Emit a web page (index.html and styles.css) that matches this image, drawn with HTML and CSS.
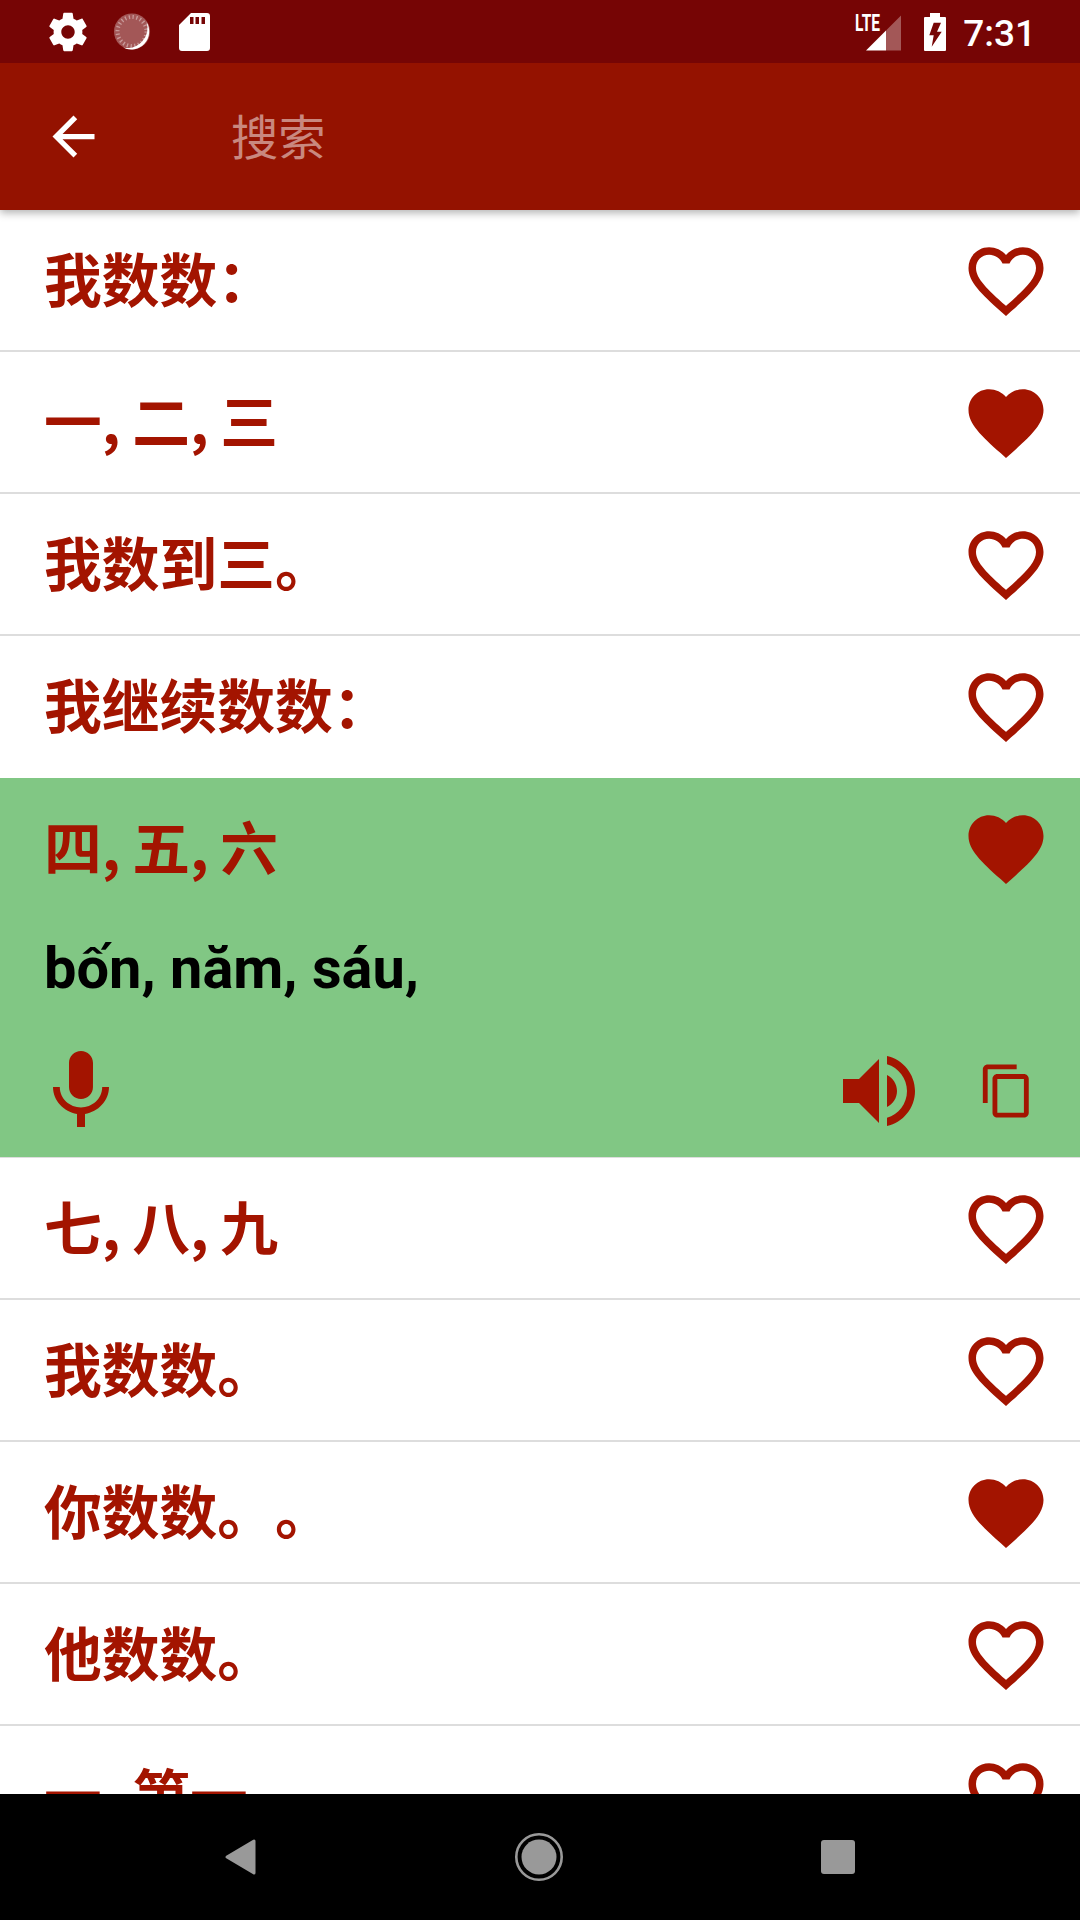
FILE: index.html
```html
<!DOCTYPE html>
<html lang="zh">
<head>
    <meta charset="UTF-8">
    <title>搜索</title>
    <link rel="stylesheet" href="styles.css">
</head>
<body>
<svg class="defs" width="0" height="0">
    <symbol id="heart" viewBox="0 0 24 24"><path d="M12 21.35l-1.45-1.32C5.4 15.36 2 12.28 2 8.5 2 5.42 4.42 3 7.5 3c1.74 0 3.41.81 4.5 2.09C13.09 3.81 14.76 3 16.5 3 19.58 3 22 5.42 22 8.5c0 3.78-3.4 6.86-8.55 11.54L12 21.35z"/></symbol>
    <symbol id="heart-o" viewBox="0 0 24 24"><path d="M16.5 3c-1.74 0-3.41.81-4.5 2.09C10.91 3.81 9.24 3 7.5 3 4.42 3 2 5.42 2 8.5c0 3.78 3.4 6.86 8.55 11.54L12 21.35l1.45-1.32C18.6 15.36 22 12.28 22 8.5 22 5.42 19.58 3 16.5 3zm-4.4 15.55l-.1.1-.1-.1C7.14 14.24 4 11.39 4 8.5 4 6.5 5.5 5 7.5 5c1.54 0 3.04.99 3.57 2.36h1.87C13.46 5.99 14.96 5 16.5 5c2 0 3.5 1.5 3.5 3.5 0 2.89-3.14 5.74-7.9 10.05z"/></symbol>
</svg>

<div class="page">
    <header class="header">
        <div class="status">
            <div class="status-left">
                <svg class="ic-status" viewBox="0 0 24 24"><path fill="#fff" d="M19.43 12.98c.04-.32.07-.64.07-.98s-.03-.66-.07-.98l2.11-1.65c.19-.15.24-.42.12-.64l-2-3.46c-.12-.22-.39-.3-.61-.22l-2.49 1c-.52-.4-1.08-.73-1.69-.98l-.38-2.65C14.46 2.18 14.25 2 14 2h-4c-.25 0-.46.18-.49.42l-.38 2.65c-.61.25-1.17.59-1.69.98l-2.49-1c-.23-.09-.49 0-.61.22l-2 3.46c-.13.22-.07.49.12.64l2.11 1.65c-.04.32-.07.65-.07.98s.03.66.07.98l-2.11 1.65c-.19.15-.24.42-.12.64l2 3.46c.12.22.39.3.61.22l2.49-1c.52.4 1.08.73 1.69.98l.38 2.65c.03.24.24.42.49.42h4c.25 0 .46-.18.49-.42l.38-2.65c.61-.25 1.17-.59 1.69-.98l2.49 1c.23.09.49 0 .61-.22l2-3.46c.12-.22.07-.49-.12-.64l-2.11-1.65zM12 15.5c-1.93 0-3.5-1.57-3.5-3.5s1.57-3.5 3.5-3.5 3.5 1.57 3.5 3.5-1.57 3.5-3.5 3.5z"/></svg>
                <svg class="ic-status" viewBox="0 0 46 46">
                    <circle cx="23" cy="22.500" r="18" fill="#fff" fill-opacity=".33"/>
                    <circle cx="23" cy="22.500" r="14.500" fill="none" stroke="#fff" stroke-opacity=".4" stroke-width="4" stroke-dasharray="1.300 2.500"/>
                    <path fill="#fff" d="M37.500 13A18 18 0 0 1 14 38.500 20 20 0 0 0 37.500 13z"/>
                </svg>
                <svg class="ic-status" viewBox="-7 -4 46 46"><path fill="#fff" fill-rule="evenodd" d="M12 0H28a3 3 0 0 1 3 3V35a3 3 0 0 1-3 3H3a3 3 0 0 1-3-3V12zM11 4V11H14.500V4zM16.500 4V11H20V4zM22.500 4V11H26V4z"/></svg>
            </div>
            <div class="status-right">
                <svg class="ic-signal" viewBox="0 0 56 46">
                    <text class="lte" x="4" y="21.500" textLength="25" lengthAdjust="spacingAndGlyphs">LTE</text>
                    <path fill="#fff" d="M15 41.500 35 21.500V41.500z"/>
                    <path fill="#fff" fill-opacity=".33" d="M35 21.500 50 6.500V41.500H35z"/>
                </svg>
                <svg class="ic-battery" viewBox="0 0 22 38"><path fill="#fff" d="M6 0H16V4H21a1 1 0 0 1 1 1V37a1 1 0 0 1-1 1H1a1 1 0 0 1-1-1V5a1 1 0 0 1 1-1H6z"/><path fill="#760505" d="M9.700 9.700H17L13 18.700H17.700L7.700 33.700 9.700 22.300H5.300z"/></svg>
                <span class="clock">7:31</span>
            </div>
        </div>
        <div class="toolbar">
            <svg class="ic-back" viewBox="0 0 24 24"><path fill="#fff" d="M20 11H7.830l5.590-5.590L12 4l-8 8 8 8 1.410-1.410L7.830 13H20v-2z"/></svg>
            <span class="search-hint">搜索</span>
        </div>
    </header>

    <main class="list">
        <div class="row"><span class="zh">我数数：</span><svg class="heart"><use href="#heart-o"/></svg></div>
        <div class="row"><span class="zh">一, 二, 三</span><svg class="heart"><use href="#heart"/></svg></div>
        <div class="row"><span class="zh">我数到三。</span><svg class="heart"><use href="#heart-o"/></svg></div>
        <div class="row no-line"><span class="zh">我继续数数：</span><svg class="heart"><use href="#heart-o"/></svg></div>

        <div class="open-item">
            <div class="row no-line"><span class="zh">四, 五, 六</span><svg class="heart"><use href="#heart"/></svg></div>
            <div class="translation">bốn, năm, sáu,</div>
            <div class="actions">
                <svg class="ic-action" viewBox="0 0 24 24"><path d="M12 14c1.660 0 2.990-1.340 2.990-3L15 5c0-1.660-1.340-3-3-3S9 3.340 9 5v6c0 1.660 1.340 3 3 3zm5.300-3c0 3-2.540 5.100-5.300 5.100S6.700 14 6.700 11H5c0 3.410 2.720 6.230 6 6.720V21h2v-3.280c3.280-.48 6-3.300 6-6.720h-1.700z"/></svg>
                <svg class="ic-action ic-speaker" viewBox="0 0 24 24"><path d="M3 9v6h4l5 5V4L7 9H3zm13.500 3c0-1.770-1.020-3.290-2.500-4.030v8.050c1.480-.73 2.500-2.250 2.500-4.020zM14 3.230v2.060c2.890.86 5 3.540 5 6.710s-2.110 5.850-5 6.710v2.060c4.010-.91 7-4.490 7-8.770s-2.990-7.860-7-8.770z"/></svg>
                <svg class="ic-copy" viewBox="0 0 24 24"><path d="M16 1H4c-1.100 0-2 .9-2 2v14h2V3h12V1zm3 4H8c-1.100 0-2 .9-2 2v14c0 1.100.9 2 2 2h11c1.100 0 2-.9 2-2V7c0-1.100-.9-2-2-2zm0 16H8V7h11v14z"/></svg>
            </div>
        </div>

        <div class="row"><span class="zh">七, 八, 九</span><svg class="heart"><use href="#heart-o"/></svg></div>
        <div class="row"><span class="zh">我数数。</span><svg class="heart"><use href="#heart-o"/></svg></div>
        <div class="row"><span class="zh">你数数。。</span><svg class="heart"><use href="#heart"/></svg></div>
        <div class="row"><span class="zh">他数数。</span><svg class="heart"><use href="#heart-o"/></svg></div>
        <div class="row"><span class="zh">一, 第一</span><svg class="heart"><use href="#heart-o"/></svg></div>
    </main>

    <nav class="navbar">
        <svg class="nav-ic" viewBox="0 0 60 60"><path fill="#999" stroke="#999" stroke-width="3" stroke-linejoin="round" d="M17 30 44 14V46z"/></svg>
        <svg class="nav-ic" viewBox="0 0 60 60"><circle cx="30" cy="30" r="22.700" fill="none" stroke="#999" stroke-width="2.600"/><circle cx="30" cy="30" r="17.500" fill="#999"/></svg>
        <svg class="nav-ic" viewBox="0 0 60 60"><rect x="13" y="13" width="34" height="34" rx="3" fill="#999"/></svg>
    </nav>
</div>
</body>
</html>
```

FILE: styles.css
```css
html, body {
    margin: 0;
    background: #fff;
}

.defs {
    position: absolute;
}

.page {
    width: 1080px;
    height: 1920px;
    display: flex;
    flex-direction: column;
    overflow: hidden;
    font-family: Roboto, "Noto Sans CJK SC", sans-serif;
}

.header {
    position: relative;
    z-index: 1;
    flex-shrink: 0;
    box-shadow: 0 3px 8px rgba(0, 0, 0, .3);
}

.status {
    height: 63px;
    background: #760505;
    display: flex;
    justify-content: space-between;
    align-items: center;
    padding: 0 44px 0 45px;
}

.status-left, .status-right {
    display: flex;
    align-items: center;
}

.status-left {
    gap: 17.500px;
}

.ic-status {
    width: 46px;
    height: 46px;
    display: block;
}

.ic-signal {
    width: 56px;
    height: 46px;
    display: block;
}

.lte {
    font-family: Roboto, sans-serif;
    font-weight: 700;
    font-size: 23px;
    fill: #fff;
}

.ic-battery {
    width: 22px;
    height: 38px;
    margin-left: 17px;
    display: block;
}

.clock {
    margin: 3px 0 0 17px;
    color: #fff;
    font-size: 37px;
    font-weight: 500;
}

.toolbar {
    height: 147px;
    background: #941200;
    display: flex;
    align-items: center;
    padding-left: 42px;
}

.ic-back {
    width: 63px;
    height: 63px;
}

.search-hint {
    margin: 0 0 5px 126px;
    font-size: 47.250px;
    color: rgba(255, 255, 255, .5);
    font-family: "Noto Sans CJK SC", sans-serif;
}

.list {
    flex: 1;
    overflow: hidden;
    background: #fff;
}

.row {
    height: 142px;
    box-sizing: border-box;
    border-bottom: 2px solid #ddd;
    display: flex;
    align-items: center;
    justify-content: space-between;
    padding: 1px 29px 0 44px;
}

.row.no-line {
    border-bottom: none;
    padding-top: 0;
}

.zh {
    margin-bottom: 8px;
    font-family: "Noto Sans CJK SC", sans-serif;
    font-size: 57.750px;
    font-weight: 700;
    color: #a31400;
    white-space: pre;
    word-spacing: -1.500px;
    text-spacing-trim: space-all;
}

.heart {
    width: 90px;
    height: 90px;
    fill: #a31400;
    flex-shrink: 0;
}

.open-item {
    height: 380px;
    box-sizing: border-box;
    border-bottom: 1px solid #ddd;
    background: #81c784;
}

.translation {
    margin-top: -1px;
    padding-left: 44px;
    height: 99px;
    line-height: 99px;
    font-size: 57.750px;
    font-weight: 700;
    color: #000;
}

.actions {
    display: flex;
    align-items: center;
    padding: 25px 44px 0 33px;
}

.ic-action {
    width: 96px;
    height: 96px;
    fill: #a31400;
}

.ic-speaker {
    margin-left: auto;
}

.ic-copy {
    width: 58px;
    height: 58px;
    margin-left: 51px;
    fill: #a31400;
}

.navbar {
    flex-shrink: 0;
    height: 126px;
    background: #000;
    display: flex;
    justify-content: space-between;
    align-items: center;
    padding: 0 212px 0 210px;
}

.nav-ic {
    width: 60px;
    height: 60px;
}
```
